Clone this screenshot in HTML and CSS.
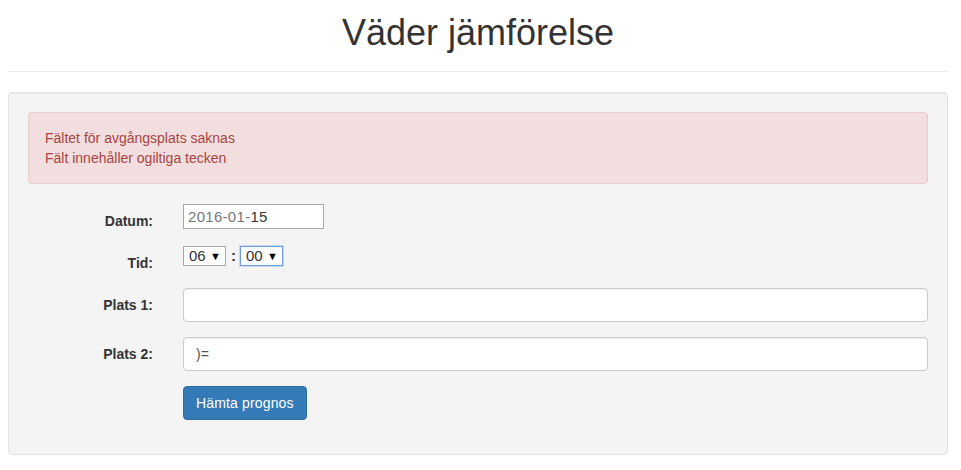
FILE: index.html
```html
<!DOCTYPE html>
<html lang="sv">
<head>
<meta charset="utf-8">
<title>Väder jämförelse</title>
<link rel="stylesheet" href="styles.css">
</head>
<body>
<div class="container">
  <h1 class="title">Väder jämförelse</h1>
  <hr class="divider">
  <div class="well">
    <div class="alert">
      <div>Fältet för avgångsplats saknas</div>
      <div>Fält innehåller ogiltiga tecken</div>
    </div>
    <form class="form">
      <div class="form-group">
        <label class="form-label">Datum:</label>
        <div class="form-field">
          <div class="date-input"><span class="muted">2016-01-</span><span class="strong">15</span></div>
        </div>
      </div>
      <div class="form-group">
        <label class="form-label">Tid:</label>
        <div class="form-field time-row">
          <div class="select"><span class="select-val">06</span><span class="select-arrow">▼</span></div>
          <span class="colon">:</span>
          <div class="select select-focus"><span class="select-val">00</span><span class="select-arrow">▼</span></div>
        </div>
      </div>
      <div class="form-group">
        <label class="form-label">Plats 1:</label>
        <div class="form-field">
          <input class="form-control" type="text" value="">
        </div>
      </div>
      <div class="form-group">
        <label class="form-label">Plats 2:</label>
        <div class="form-field">
          <input class="form-control" type="text" value=")=">
        </div>
      </div>
      <div class="form-group">
        <div class="form-label"></div>
        <div class="form-field">
          <button class="btn" type="button">Hämta prognos</button>
        </div>
      </div>
    </form>
  </div>
</div>
</body>
</html>
```
FILE: styles.css
```css
* { box-sizing: border-box; }
html, body {
  margin: 0;
  padding: 0;
  background: #fff;
}
body {
  font-family: "Liberation Sans", Arial, sans-serif;
  font-size: 14px;
  line-height: 20px;
  color: #333;
  padding: 0 8px;
}
.container {
  width: 940px;
}
.title {
  margin: 13px 0 0;
  font-size: 36px;
  line-height: 40px;
  font-weight: 400;
  text-align: center;
  color: #333;
}
.divider {
  margin: 18px 0 20px;
  border: 0;
  border-top: 1px solid #eee;
  height: 0;
}
.well {
  background: #f4f4f4;
  border: 1px solid #e3e3e3;
  border-radius: 4px;
  box-shadow: inset 0 1px 1px rgba(0,0,0,.05);
  padding: 19px;
}
.alert {
  background: #f2dede;
  border: 1px solid #ebccd1;
  border-radius: 4px;
  color: #a94442;
  padding: 15px 16px;
  margin-bottom: 20px;
}
.form {
  margin: 0 -15px;
}
.form-group {
  display: flex;
  align-items: flex-start;
  margin-bottom: 15px;
}
.form-label {
  width: 155px;
  flex: none;
  padding: 7px 15px 0;
  text-align: right;
  font-weight: 700;
  line-height: 20px;
}
.form-field {
  flex: 1;
  padding: 0 15px;
}
.date-input {
  width: 141px;
  height: 25px;
  border: 1px solid #a9a9a9;
  background: #fff;
  padding: 2px 0 0 4px;
  font-size: 15px;
  line-height: 20px;
  letter-spacing: 0.3px;
}
.muted { color: #777; }
.strong { color: #333; }
.time-row {
  display: flex;
  align-items: center;
  padding-top: 0;
}
.select {
  display: flex;
  align-items: center;
  justify-content: space-between;
  width: 43px;
  height: 20px;
  border: 1px solid #a9a9a9;
  background: #fff;
  padding: 0 4px 0 5px;
  font-size: 15px;
  line-height: 18px;
  color: #333;
}
.select-focus {
  border-color: #6b9be6;
  box-shadow: 0 0 0 1px rgba(122,167,229,.35);
}
.select-arrow {
  font-size: 11px;
  color: #000;
}
.colon {
  font-weight: 700;
  margin: 0 4px 0 5px;
  font-size: 15px;
}
.form-control {
  display: block;
  width: 100%;
  height: 34px;
  padding: 6px 12px;
  font-family: inherit;
  font-size: 14px;
  line-height: 20px;
  color: #555;
  background: #fff;
  border: 1px solid #ccc;
  border-radius: 4px;
  box-shadow: inset 0 1px 1px rgba(0,0,0,.075);
  outline: none;
}
.btn {
  display: inline-block;
  height: 34px;
  padding: 6px 12px;
  font-family: inherit;
  font-size: 14px;
  line-height: 20px;
  letter-spacing: 0.15px;
  color: #fff;
  background: #337ab7;
  border: 1px solid #2e6da4;
  border-radius: 4px;
  cursor: pointer;
}
```
